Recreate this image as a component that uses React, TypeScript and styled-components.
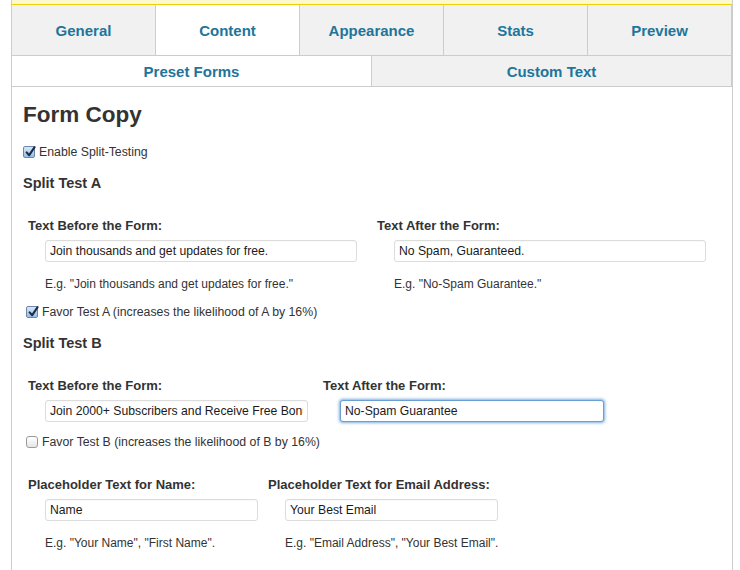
import React from "react";
import styled, { createGlobalStyle } from "styled-components";

const GlobalStyle = createGlobalStyle`
  html, body { margin: 0; padding: 0; background: #fff; }
  body { font-family: "Liberation Sans", Arial, Helvetica, sans-serif; }
  * { box-sizing: border-box; }
`;

const Frame = styled.div`
  margin-left: 11px;
  width: 722px;
  min-height: 570px;
  border-left: 1px solid #cccccc;
  border-right: 1px solid #cccccc;
`;

const Notice = styled.div`
  height: 5px;
  background: #fcf9cc;
  border-bottom: 1px solid #f0cf0a;
`;

const TabRow = styled.div<{ $cols: number }>`
  display: grid;
  grid-template-columns: repeat(${(p) => p.$cols}, 1fr);
  border-bottom: 1px solid #cccccc;
`;

const Tab = styled.div<{ $active?: boolean; $h: number }>`
  height: ${(p) => p.$h}px;
  display: flex;
  align-items: center;
  justify-content: center;
  background: ${(p) => (p.$active ? "#ffffff" : "#f1f1f1")};
  border-right: 1px solid #cccccc;
  color: #21759b;
  font-size: 15px;
  font-weight: bold;
`;

const Content = styled.div`
  padding: 14px 0 40px 11px;
  color: #333333;
`;

const Heading = styled.h2`
  margin: 0;
  font-size: 22.5px;
  line-height: 28px;
  font-weight: bold;
  color: #333333;
`;

const CheckRow = styled.label<{ $mt: number; $indent?: number }>`
  display: flex;
  align-items: center;
  gap: 4px;
  height: 16px;
  margin-top: ${(p) => p.$mt}px;
  margin-left: ${(p) => p.$indent ?? 0}px;
  font-size: 12.3px;
  color: #333333;
`;

const Box = styled.span<{ $checked?: boolean }>`
  position: relative;
  display: inline-block;
  width: 12px;
  height: 12px;
  border-radius: ${(p) => (p.$checked ? "2px" : "3px")};
  border: 1px solid ${(p) => (p.$checked ? "#6f87a6" : "#9a9a9a")};
  background: ${(p) =>
    p.$checked
      ? "linear-gradient(#d7e8f8, #97bfe6)"
      : "linear-gradient(#ffffff, #e6e6e6)"};
  svg {
    position: absolute;
    left: 0px;
    top: -2px;
  }
`;

const SectionTitle = styled.h3`
  margin: 14px 0 0;
  font-size: 14.5px;
  line-height: 18px;
  font-weight: bold;
  color: #333333;
`;

const FieldGrid = styled.div<{ $col: number; $mt: number }>`
  display: grid;
  grid-template-columns: ${(p) => p.$col}px auto;
  margin: ${(p) => p.$mt}px 0 0 5px;
`;

const Field = styled.div`
  display: flex;
  flex-direction: column;
  align-items: flex-start;
`;

const Label = styled.div`
  font-size: 13px;
  line-height: 16px;
  font-weight: bold;
  color: #333333;
`;

const Input = styled.input<{ $w: number; $focus?: boolean }>`
  margin: 6px 0 0 17px;
  width: ${(p) => p.$w}px;
  height: 22px;
  padding: 0 4px;
  border: 1px solid ${(p) => (p.$focus ? "#6a9fd4" : "#dcdcdc")};
  border-radius: 3px;
  box-shadow: ${(p) =>
    p.$focus ? "0 0 3px 1px rgba(80, 145, 215, 0.75)" : "inset 0 1px 1px rgba(0,0,0,0.03)"};
  background: #ffffff;
  font-family: "Liberation Sans", Arial, Helvetica, sans-serif;
  font-size: 12.2px;
  color: #1a1a1a;
  outline: none;
`;

const Help = styled.div`
  margin: 14px 0 0 17px;
  font-size: 12px;
  line-height: 16px;
  color: #333333;
`;

const Check = ({ checked }: { checked?: boolean }) => (
  <Box $checked={checked}>
    {checked && (
      <svg width="13" height="13" viewBox="0 0 13 13">
        <path
          d="M2.6 7.4 L5.2 10.2 L10.6 2.2"
          fill="none"
          stroke="#1d2b4f"
          strokeWidth="2.1"
          strokeLinecap="round"
          strokeLinejoin="round"
        />
      </svg>
    )}
  </Box>
);

type FieldSpec = { label: string; value: string; width: number; help?: string; focus?: boolean };

const FieldPair = ({ col, mt, fields }: { col: number; mt: number; fields: FieldSpec[] }) => (
  <FieldGrid $col={col} $mt={mt}>
    {fields.map((f) => (
      <Field key={f.label}>
        <Label>{f.label}</Label>
        <Input $w={f.width} $focus={f.focus} defaultValue={f.value} readOnly />
        {f.help && <Help>{f.help}</Help>}
      </Field>
    ))}
  </FieldGrid>
);

const mainTabs = ["General", "Content", "Appearance", "Stats", "Preview"];
const subTabs = ["Preset Forms", "Custom Text"];

export default function App() {
  return (
    <>
      <GlobalStyle />
      <Frame>
        <Notice />
        <TabRow $cols={5}>
          {mainTabs.map((t) => (
            <Tab key={t} $h={50} $active={t === "Content"}>
              {t}
            </Tab>
          ))}
        </TabRow>
        <TabRow $cols={2}>
          {subTabs.map((t) => (
            <Tab key={t} $h={30} $active={t === "Preset Forms"}>
              {t}
            </Tab>
          ))}
        </TabRow>
        <Content>
          <Heading>Form Copy</Heading>
          <CheckRow $mt={15}>
            <Check checked />
            Enable Split-Testing
          </CheckRow>

          <SectionTitle>Split Test A</SectionTitle>
          <FieldPair
            col={349}
            mt={26}
            fields={[
              {
                label: "Text Before the Form:",
                value: "Join thousands and get updates for free.",
                width: 312,
                help: 'E.g. "Join thousands and get updates for free."',
              },
              {
                label: "Text After the Form:",
                value: "No Spam, Guaranteed.",
                width: 312,
                help: 'E.g. "No-Spam Guarantee."',
              },
            ]}
          />
          <CheckRow $mt={12} $indent={3}>
            <Check checked />
            Favor Test A (increases the likelihood of A by 16%)
          </CheckRow>

          <SectionTitle>Split Test B</SectionTitle>
          <FieldPair
            col={295}
            mt={26}
            fields={[
              {
                label: "Text Before the Form:",
                value: "Join 2000+ Subscribers and Receive Free Bonus",
                width: 263,
              },
              {
                label: "Text After the Form:",
                value: "No-Spam Guarantee",
                width: 264,
                focus: true,
              },
            ]}
          />
          <CheckRow $mt={12} $indent={3}>
            <Check />
            Favor Test B (increases the likelihood of B by 16%)
          </CheckRow>

          <FieldPair
            col={240}
            mt={27}
            fields={[
              {
                label: "Placeholder Text for Name:",
                value: "Name",
                width: 213,
                help: 'E.g. "Your Name", "First Name".',
              },
              {
                label: "Placeholder Text for Email Address:",
                value: "Your Best Email",
                width: 213,
                help: 'E.g. "Email Address", "Your Best Email".',
              },
            ]}
          />
        </Content>
      </Frame>
    </>
  );
}
